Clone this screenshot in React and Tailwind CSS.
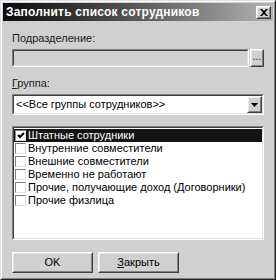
import { useState } from "react";

const font = { fontFamily: '"Liberation Sans", Arial, sans-serif' };

const groups = [
  "Штатные сотрудники",
  "Внутренние совместители",
  "Внешние совместители",
  "Временно не работают",
  "Прочие, получающие доход (Договорники)",
  "Прочие физлица",
];

const Sunken = ({ className = "", children }) => (
  <div className={`border border-t-[#808080] border-l-[#808080] border-r-white border-b-white ${className}`}>
    <div className="h-full border border-t-[#404040] border-l-[#404040] border-r-[#e0e0e0] border-b-[#e0e0e0]">
      {children}
    </div>
  </div>
);

const Raised = ({ className = "", children }) => (
  <div className={`border border-t-white border-l-white border-r-[#404040] border-b-[#404040] ${className}`}>
    <div className="h-full flex items-center justify-center border border-t-[#e8e8e8] border-l-[#e8e8e8] border-r-[#808080] border-b-[#808080]">
      {children}
    </div>
  </div>
);

const App = () => {
  const [checked, setChecked] = useState([true, false, false, false, false, false]);

  return (
    <div className="w-[276px] h-[280px] bg-[#d0d0d0] text-[11px] text-black overflow-hidden" style={font}>
      <div className="h-full border border-t-[#e0e0e0] border-l-[#e0e0e0] border-r-[#202020] border-b-[#202020]">
        <div className="h-full border border-t-white border-l-white border-r-[#808080] border-b-[#808080] p-[1px] flex flex-col">
          {/* title bar */}
          <div className="h-[18px] flex items-center justify-between pl-[3px] pr-[2px] bg-gradient-to-r from-[#0c0c0c] via-[#5a5a5a] to-[#b4b4b4]">
            <span className="font-bold text-white text-[12px] tracking-[0.2px]">Заполнить список сотрудников</span>
            <Raised className="w-[15px] h-[13px] bg-[#d0d0d0]">
              <svg width="8" height="7" viewBox="0 0 8 7">
                <path d="M0 0h2l2 2 2-2h2L5 3.5 8 7H6L4 5 2 7H0l3-3.5z" fill="#000" />
              </svg>
            </Raised>
          </div>

          <div className="flex flex-col px-[9px]">
            <div className="mt-[11px] h-[13px] leading-[13px] text-[#202020]">Подразделение:</div>
            <div className="mt-[4px] flex h-[18px]">
              <Sunken className="flex-1 bg-[#d0d0d0]" />
              <Raised className="w-[14px] bg-[#d0d0d0] ml-[1px]">
                <span className="text-[10px] leading-none -mt-[3px]">...</span>
              </Raised>
            </div>

            <div className="mt-[10px] h-[13px] leading-[13px] text-[#202020]">
              <span className="underline">Г</span>руппа:
            </div>
            <Sunken className="mt-[4px] h-[21px] bg-white">
              <div className="h-full flex items-center">
                <span className="flex-1 pl-[2px] text-[11px]">&lt;&lt;Все группы сотрудников&gt;&gt;</span>
                <Raised className="w-[15px] h-[17px] bg-[#d0d0d0]">
                  <svg width="7" height="4" viewBox="0 0 7 4">
                    <path d="M0 0h7L3.5 4z" fill="#000" />
                  </svg>
                </Raised>
              </div>
            </Sunken>

            <Sunken className="mt-[11px] h-[114px] bg-white">
              <div className="flex flex-col pt-[1px]">
                {groups.map((g, i) => (
                  <div
                    key={g}
                    className={`h-[13px] flex items-center pl-[1px] ${i === 0 ? "bg-[#141414] text-white" : ""}`}
                    onClick={() => setChecked(checked.map((c, j) => (j === i ? !c : c)))}
                  >
                    <div className="w-[11px] h-[11px] bg-white border border-t-[#808080] border-l-[#808080] border-r-[#e0e0e0] border-b-[#e0e0e0] flex items-center justify-center">
                      {checked[i] && (
                        <svg width="8" height="7" viewBox="0 0 8 7">
                          <path d="M1 3l2 2 4-4" stroke="#000" strokeWidth="2" fill="none" />
                        </svg>
                      )}
                    </div>
                    <span className="ml-[2px] text-[11px] leading-[13px] whitespace-nowrap">{g}</span>
                  </div>
                ))}
              </div>
            </Sunken>

            <div className="mt-[12px] flex gap-[5px]">
              <Raised className="w-[81px] h-[21px] bg-[#d0d0d0]">
                <span>OK</span>
              </Raised>
              <Raised className="w-[81px] h-[21px] bg-[#d0d0d0]">
                <span><span className="underline">З</span>акрыть</span>
              </Raised>
            </div>
          </div>
        </div>
      </div>
    </div>
  );
};

export default App;
